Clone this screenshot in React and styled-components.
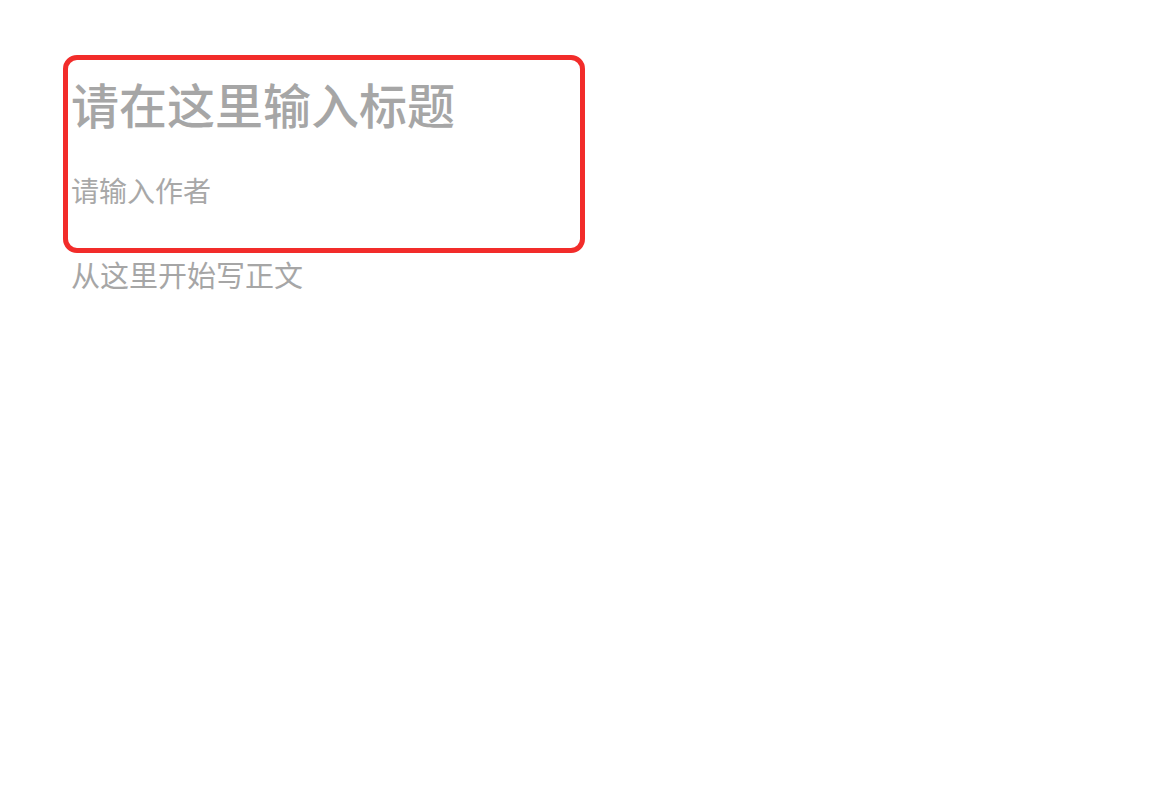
import React from "react";
import styled, { createGlobalStyle } from "styled-components";

const GlobalStyle = createGlobalStyle`
  html, body {
    margin: 0;
    padding: 0;
    background: #fff;
  }
  body {
    font-family: "Noto Sans CJK SC", "Noto Sans", sans-serif;
  }
`;

const Page = styled.div`
  padding: 55px 0 0 63px;
`;

const Editor = styled.div`
  width: 522px;
`;

const HeaderBox = styled.div`
  box-sizing: border-box;
  border: 5px solid #f22c2a;
  border-radius: 14px;
  padding: 11px 3px 38px;
`;

const Title = styled.div`
  font-size: 48px;
  line-height: 64px;
  font-weight: 500;
  color: #a6a6a6;
  white-space: nowrap;
`;

const Author = styled.div`
  margin-top: 35px;
  font-size: 28px;
  line-height: 40px;
  color: #a8a8a8;
`;

const Body = styled.div`
  margin-top: 1px;
  padding-left: 8px;
  font-size: 29px;
  line-height: 40px;
  color: #a6a6a6;
`;

export default function App() {
  return (
    <>
      <GlobalStyle />
      <Page>
        <Editor>
          <HeaderBox>
            <Title>请在这里输入标题</Title>
            <Author>请输入作者</Author>
          </HeaderBox>
          <Body>从这里开始写正文</Body>
        </Editor>
      </Page>
    </>
  );
}
